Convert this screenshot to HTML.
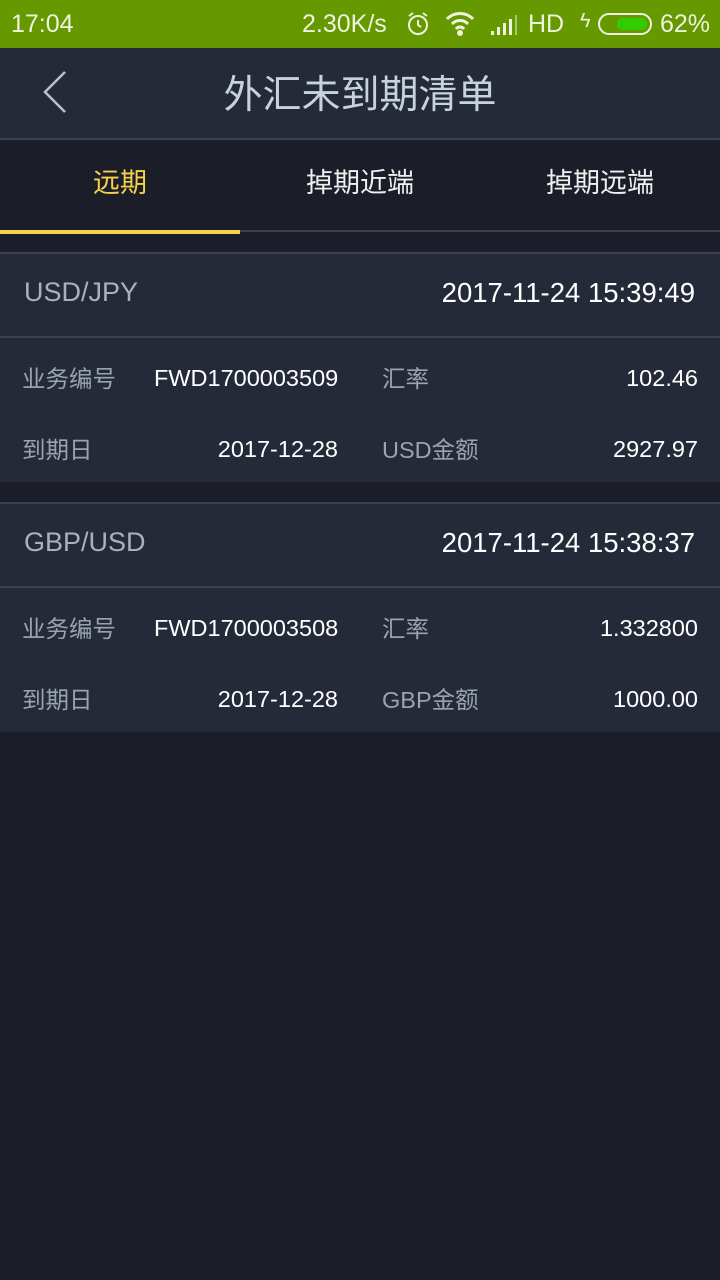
<!DOCTYPE html>
<html><head><meta charset="utf-8"><style>
*{margin:0;padding:0;box-sizing:border-box}
body{width:720px;height:1280px;background:#1b1e28;font-family:"Liberation Sans","Noto Sans CJK SC",sans-serif;position:relative;overflow:hidden}
.abs{position:absolute}
.sb{top:0;left:0;width:720px;height:48px;background:#669900;color:#eef3e0;font-size:25px}
.hd{top:48px;left:0;width:720px;height:90px;background:#252a38}
.title{width:720px;text-align:center;top:68px;font-size:39px;color:#c8d2dc;line-height:56px}
.line{left:0;width:720px;background:#3b4152}
.tab{top:161px;font-size:27px;color:#f0f0f0;width:240px;text-align:center}
.card{left:0;width:720px;background:#252a38}
.t{font-size:23.5px;color:#9aa4b0;position:absolute;line-height:30px}
.v{font-size:23.5px;color:#fff;position:absolute;line-height:30px}
.r{text-align:right}
</style></head><body>
<div class="abs sb">
<span class="abs" style="left:11px;top:10px">17:04</span>
<span class="abs" style="left:302px;top:10px">2.30K/s</span>
<svg class="abs" style="left:404px;top:10px" width="28" height="28" viewBox="0 0 28 28" fill="none" stroke="#eef3e0" stroke-width="2"><circle cx="14" cy="15" r="9"/><path d="M14 10v5l3 2M5 6l4-3M23 6l-4-3"/></svg>
<svg class="abs" style="left:444px;top:10px" width="32" height="26" viewBox="0 0 32 26" fill="none" stroke="#eef3e0" stroke-width="3"><path d="M3 9a18 18 0 0 1 26 0M8 14a11 11 0 0 1 16 0M12 19a5 5 0 0 1 8 0"/><circle cx="16" cy="23" r="1.5" fill="#eef3e0"/></svg>
<svg class="abs" style="left:490px;top:14px" width="28" height="22" viewBox="0 0 28 22" fill="#eef3e0"><rect x="1" y="17" width="3" height="4"/><rect x="7" y="13" width="3" height="8"/><rect x="13" y="9" width="3" height="12"/><rect x="19" y="5" width="3" height="16"/><rect x="25" y="1" width="2" height="20" opacity=".5"/></svg>
<span class="abs" style="left:528px;top:10px">HD</span>
<span class="abs" style="left:580px;top:10px;font-size:20px">ϟ</span>
<div class="abs" style="left:598px;top:13px;width:54px;height:22px;border:2px solid #eef3e0;border-radius:11px"><div style="position:absolute;left:17px;top:3px;width:30px;height:12px;background:#33cc00;border-radius:5px"></div></div>
<span class="abs" style="left:660px;top:10px">62%</span>
</div>
<div class="abs hd"></div>
<svg class="abs" style="left:40px;top:70px" width="30" height="44" viewBox="0 0 30 44" fill="none" stroke="#b8c2cc" stroke-width="2.5"><path d="M25 2L5 22l20 20"/></svg>
<div class="abs title">外汇未到期清单</div>
<div class="abs line" style="top:138px;height:2px"></div>
<div class="abs tab" style="left:0;color:#f5d04a">远期</div>
<div class="abs tab" style="left:240px">掉期近端</div>
<div class="abs tab" style="left:480px">掉期远端</div>
<div class="abs line" style="top:230px;height:2px"></div>
<div class="abs" style="top:230px;left:0;width:240px;height:4px;background:#f5d04a"></div>

<div class="abs line" style="top:252px;height:2px"></div>
<div class="abs card" style="top:254px;height:228px">
<div class="abs" style="left:24px;top:23px;font-size:27px;color:#a8b2bc">USD/JPY</div>
<div class="abs r" style="right:25px;top:23px;font-size:27.5px;color:#fff">2017-11-24 15:39:49</div>
<div class="abs line" style="top:82px;height:2px"></div>
<div class="t" style="left:22px;top:110px">业务编号</div>
<div class="v" style="left:154px;top:109px">FWD1700003509</div>
<div class="t" style="left:382px;top:110px">汇率</div>
<div class="v r" style="right:22px;top:109px">102.46</div>
<div class="t" style="left:22px;top:181px">到期日</div>
<div class="v r" style="right:382px;top:180px">2017-12-28</div>
<div class="t" style="left:382px;top:181px">USD金额</div>
<div class="v r" style="right:22px;top:180px">2927.97</div>
</div>

<div class="abs line" style="top:502px;height:2px"></div>
<div class="abs card" style="top:504px;height:228px">
<div class="abs" style="left:24px;top:23px;font-size:27px;color:#a8b2bc">GBP/USD</div>
<div class="abs r" style="right:25px;top:23px;font-size:27.5px;color:#fff">2017-11-24 15:38:37</div>
<div class="abs line" style="top:82px;height:2px"></div>
<div class="t" style="left:22px;top:110px">业务编号</div>
<div class="v" style="left:154px;top:109px">FWD1700003508</div>
<div class="t" style="left:382px;top:110px">汇率</div>
<div class="v r" style="right:22px;top:109px">1.332800</div>
<div class="t" style="left:22px;top:181px">到期日</div>
<div class="v r" style="right:382px;top:180px">2017-12-28</div>
<div class="t" style="left:382px;top:181px">GBP金额</div>
<div class="v r" style="right:22px;top:180px">1000.00</div>
</div>
</body></html>
